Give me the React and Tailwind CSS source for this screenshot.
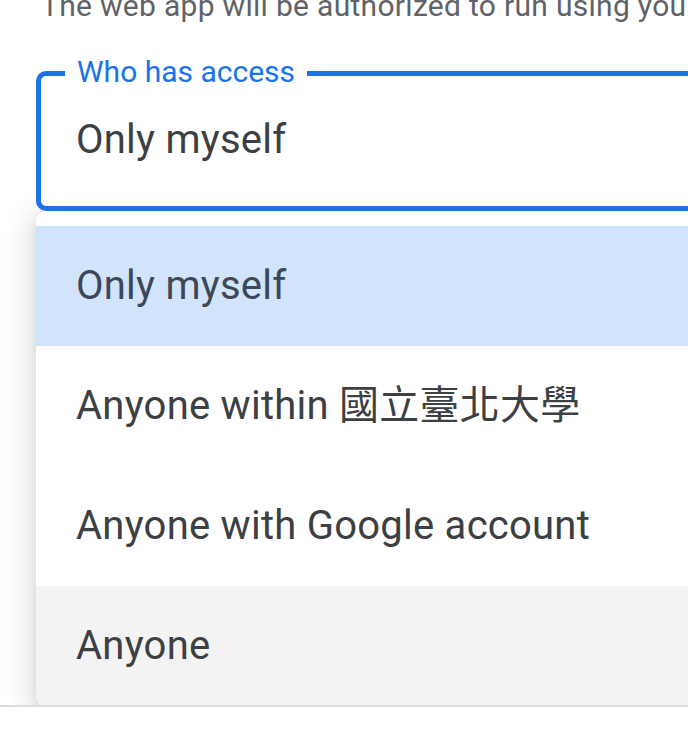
export default function App() {
  const font = { fontFamily: 'Roboto, "Noto Sans CJK TC", "Noto Sans", sans-serif' };
  return (
    <div className="w-[688px] h-[748px] bg-white overflow-hidden" style={font}>
      <div className="h-[707px] overflow-hidden border-b-2 border-[#dadce0] pl-[36px]">
        <p className="mt-[-16px] ml-[5px] leading-[44px] text-[30px] text-[#5f6368] whitespace-nowrap tracking-[0.3px]">
          The web app will be authorized to run using your account data.
        </p>
        <div className="relative mt-[43px] w-[720px] h-[140px] border-[5px] border-[#1a73e8] rounded-[10px] bg-white flex items-center pl-[35px] pb-[3px]">
          <span className="absolute left-[24px] top-[-24px] bg-white px-[12px] text-[30px] leading-[40px] text-[#1a73e8] whitespace-nowrap">
            Who has access
          </span>
          <span className="text-[40px] text-[#3c4043] whitespace-nowrap tracking-[0.25px]">Only myself</span>
        </div>
        <div className="w-[720px] bg-white rounded-[10px] pt-[15px] shadow-[0_8px_30px_6px_rgba(0,0,0,0.13),0_3px_10px_0_rgba(0,0,0,0.08)]">
          <div className="h-[120px] flex items-center pl-[40px] bg-[#d2e3fc] text-[40px] text-[#3c4858] whitespace-nowrap tracking-[0.25px]">
            Only myself
          </div>
          <div className="h-[120px] flex items-center pl-[40px] text-[40px] text-[#3c4043] whitespace-nowrap tracking-[0.25px]">
            Anyone within 國立臺北大學
          </div>
          <div className="h-[120px] flex items-center pl-[40px] text-[40px] text-[#3c4043] whitespace-nowrap tracking-[0.25px]">
            Anyone with Google account
          </div>
          <div className="h-[120px] flex items-center pl-[40px] bg-[#f3f3f3] text-[40px] text-[#3c4043] whitespace-nowrap rounded-b-[10px] tracking-[0.25px]">
            Anyone
          </div>
        </div>
      </div>
    </div>
  );
}
